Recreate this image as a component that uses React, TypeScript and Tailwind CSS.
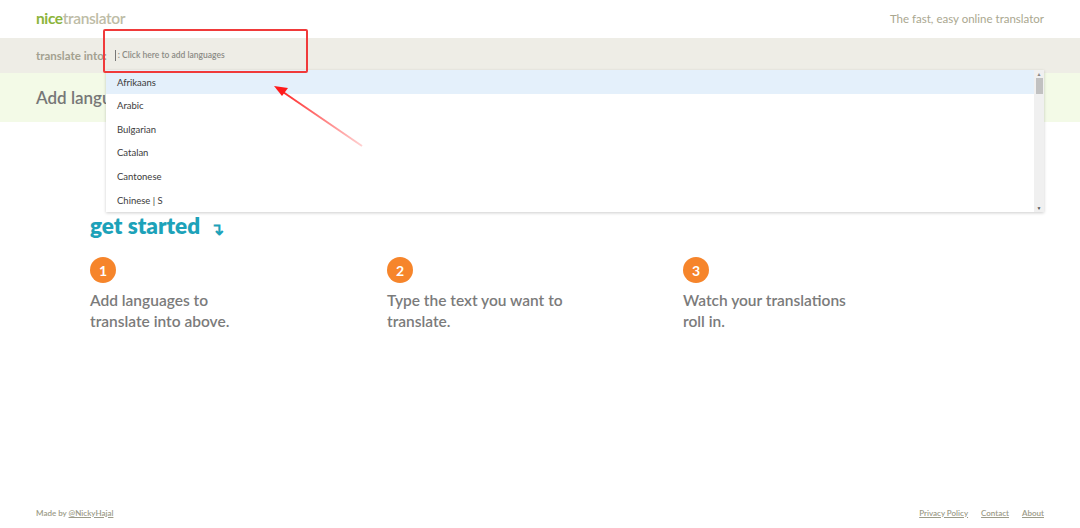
import { useState } from "react";

const languages = ["Afrikaans", "Arabic", "Bulgarian", "Catalan", "Cantonese", "Chinese | S"];

const steps = [
  { n: "1", lines: ["Add languages to", "translate into above."] },
  { n: "2", lines: ["Type the text you want to", "translate."] },
  { n: "3", lines: ["Watch your translations", "roll in."] },
];

function LanguageDropdown() {
  const [active, setActive] = useState(0);
  return (
    <div className="absolute left-[106px] top-[70px] w-[938px] h-[142px] bg-white flex shadow-[0_1px_3px_rgba(0,0,0,0.2)]">
      <ul className="flex-1 overflow-hidden">
        {languages.map((lang, i) => (
          <li
            key={lang}
            onMouseEnter={() => setActive(i)}
            className={`h-[23.6px] flex items-center pl-[11px] pt-[2px] text-[9.5px] text-[#3b3b3b] ${
              i === active ? "bg-[#e4f0fb]" : "bg-white"
            }`}
          >
            {lang}
          </li>
        ))}
      </ul>
      <div className="w-[10px] bg-[#f0f0f0] flex flex-col items-center">
        <span className="text-[5px] leading-[8px] text-[#888]">▲</span>
        <div className="w-[7px] h-[16px] bg-[#c1c1c1]" />
        <div className="flex-1" />
        <span className="text-[5px] leading-[8px] text-[#555]">▼</span>
      </div>
    </div>
  );
}

export default function App() {
  return (
    <div
      className="relative w-[1080px] h-[528px] bg-white flex flex-col overflow-hidden"
      style={{ fontFamily: "Lato, 'Open Sans', sans-serif" }}
    >
      <header className="h-[38px] px-[36px] flex items-center justify-between">
        <div className="text-[15.5px] font-bold tracking-tight">
          <span className="text-[#8cb43c]">nice</span>
          <span className="text-[#bdbca6] font-semibold">translator</span>
        </div>
        <div className="text-[11.5px] text-[#aaa78f]">The fast, easy online translator</div>
      </header>

      <div className="h-[35px] bg-[#eeede6] px-[36px] flex items-center">
        <span className="text-[11.5px] font-bold text-[#a3a190]">translate into:</span>
        <span className="ml-[8px] w-px h-[11px] bg-[#777]" />
        <span className="ml-[2px] text-[8.5px] text-[#8b8b85] font-semibold">: Click here to add languages</span>
      </div>

      <div className="h-[49px] bg-[#f3fae7] px-[36px] flex items-center">
        <span className="text-[17px] font-semibold text-[#777]">Add languages</span>
      </div>

      <main className="px-[90px] pt-[91px]">
        <h2 className="text-[22.5px] font-extrabold text-[#1da2b9] leading-[26px] flex items-end gap-[10px]">
          get started
          <span className="text-[17px] font-bold leading-[20px]">↴</span>
        </h2>
        <div className="mt-[18px] grid grid-cols-[297px_296px_297px]">
          {steps.map((s) => (
            <div key={s.n}>
              <div className="w-[26px] h-[26px] rounded-full bg-[#f6852b] text-white text-[14px] font-bold flex items-center justify-center">
                {s.n}
              </div>
              <p className="mt-[7px] text-[15.5px] font-semibold text-[#7b7b7b] leading-[21px]">
                {s.lines[0]}
                <br />
                {s.lines[1]}
              </p>
            </div>
          ))}
        </div>
      </main>

      <footer className="mt-auto h-[31px] px-[36px] flex items-center justify-between text-[8px] font-semibold text-[#9c9b88]">
        <span>
          Made by <span className="underline">@NickyHajal</span>
        </span>
        <nav className="flex gap-[13px]">
          <span className="underline">Privacy Policy</span>
          <span className="underline">Contact</span>
          <span className="underline">About</span>
        </nav>
      </footer>

      <LanguageDropdown />

      {/* annotation overlay */}
      <div className="absolute left-[103px] top-[29px] w-[205px] h-[44px] border-2 border-[#f03a3a] rounded-[2px]" />
      <svg className="absolute left-0 top-0 pointer-events-none" width="1080" height="528">
        <defs>
          <linearGradient id="fade" x1="275" y1="87" x2="362" y2="146" gradientUnits="userSpaceOnUse">
            <stop offset="0" stopColor="#ff1a1a" />
            <stop offset="1" stopColor="#ff1a1a" stopOpacity="0.2" />
          </linearGradient>
        </defs>
        <line x1="283" y1="92" x2="362" y2="146" stroke="url(#fade)" strokeWidth="2" />
        <polygon points="274,86 288,88 282,96" fill="#ff1a1a" />
      </svg>
    </div>
  );
}
